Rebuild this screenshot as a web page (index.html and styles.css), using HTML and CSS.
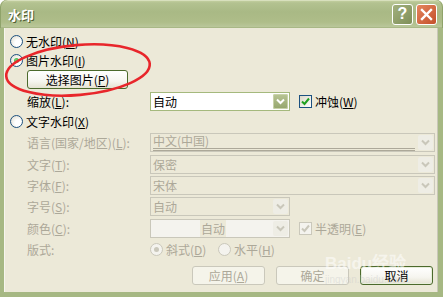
FILE: index.html
```html
<!DOCTYPE html>
<html lang="zh-CN">
<head>
    <meta charset="UTF-8">
    <title>水印</title>
    <link rel="stylesheet" href="styles.css">
</head>
<body>

    <div class="window">
        <!-- 标题栏 -->
        <div class="titlebar">
            <span class="title">水印</span>
            <div class="caption-buttons">
                <span class="cap help">?</span>
                <span class="cap close">
                    <svg width="13" height="13" viewBox="0 0 13 13"><path d="M2 2 L11 11 M11 2 L2 11" stroke="#fff" stroke-width="2.4" stroke-linecap="square"/></svg>
                </span>
            </div>
        </div>

        <!-- 对话框内容 -->
        <div class="client">
            <div class="row r1"><span class="radio"></span><span class="txt">无水印(<u>N</u>)</span></div>
            <div class="row r2"><span class="radio checked"></span><span class="txt">图片水印(<u>I</u>)</span></div>
            <div class="row r-pick indent"><span class="btn pick">选择图片(<u>P</u>)</span></div>
            <div class="row r-zoom indent">
                <span class="label">缩放(<u>L</u>):</span>
                <div class="combo narrow"><span class="value">自动</span><span class="arrow"><svg width="9" height="7" viewBox="0 0 9 7"><path d="M1 1.5 L4.5 5 L8 1.5" fill="none" stroke="#fff" stroke-width="2"/></svg></span></div>
                <div class="check-row"><span class="check"><svg width="9" height="9" viewBox="0 0 9 9"><path d="M1 4.5 L3.5 7 L8 1.5" fill="none" stroke="#21a121" stroke-width="2"/></svg></span><span class="txt">冲蚀(<u>W</u>)</span></div>
            </div>
            <div class="row r3"><span class="radio"></span><span class="txt">文字水印(<u>X</u>)</span></div>

            <div class="row r-lang indent off">
                <span class="label">语言(国家/地区)(<u>L</u>):</span>
                <div class="combo wide dis"><span class="value underline">中文(中国)</span><span class="arrow"><svg width="9" height="7" viewBox="0 0 9 7"><path d="M1 1.5 L4.5 5 L8 1.5" fill="none" stroke="#c9c7ba" stroke-width="2"/></svg></span></div>
            </div>
            <div class="row r-text indent off">
                <span class="label">文字(<u>T</u>):</span>
                <div class="combo wide dis"><span class="value">保密</span><span class="arrow"><svg width="9" height="7" viewBox="0 0 9 7"><path d="M1 1.5 L4.5 5 L8 1.5" fill="none" stroke="#c9c7ba" stroke-width="2"/></svg></span></div>
            </div>
            <div class="row r-font indent off">
                <span class="label">字体(<u>F</u>):</span>
                <div class="combo wide dis"><span class="value">宋体</span><span class="arrow"><svg width="9" height="7" viewBox="0 0 9 7"><path d="M1 1.5 L4.5 5 L8 1.5" fill="none" stroke="#c9c7ba" stroke-width="2"/></svg></span></div>
            </div>
            <div class="row r-size indent off">
                <span class="label">字号(<u>S</u>):</span>
                <div class="combo narrow dis"><span class="value">自动</span><span class="arrow"><svg width="9" height="7" viewBox="0 0 9 7"><path d="M1 1.5 L4.5 5 L8 1.5" fill="none" stroke="#c9c7ba" stroke-width="2"/></svg></span></div>
            </div>
            <div class="row r-color indent off">
                <span class="label">颜色(<u>C</u>):</span>
                <div class="combo narrow dis light"><span class="value centered"><span class="chip">自动</span></span><span class="arrow"><svg width="9" height="7" viewBox="0 0 9 7"><path d="M1 1.5 L4.5 5 L8 1.5" fill="none" stroke="#c9c7ba" stroke-width="2"/></svg></span></div>
                <div class="check-row"><span class="check dis"><svg width="9" height="9" viewBox="0 0 9 9"><path d="M1 4.5 L3.5 7 L8 1.5" fill="none" stroke="#c9c7ba" stroke-width="2"/></svg></span><span class="txt">半透明(<u>E</u>)</span></div>
            </div>
            <div class="row r-layout indent off">
                <span class="label">版式:</span>
                <span class="radio dis checked"></span><span class="txt opt">斜式(<u>D</u>)</span>
                <span class="radio dis second"></span><span class="txt">水平(<u>H</u>)</span>
            </div>

            <!-- 底部按钮 -->
            <div class="footer">
                <span class="btn dis">应用(<u>A</u>)</span>
                <span class="btn dis">确定</span>
                <span class="btn default">取消</span>
            </div>
        </div>

        <!-- 红色圈注 -->
        <svg class="annotation" width="160" height="70" viewBox="0 0 160 70">
            <ellipse cx="78" cy="33" rx="72" ry="25" transform="rotate(-5 78 33)" fill="none" stroke="#e8262b" stroke-width="2.6"/>
        </svg>

        <div class="stamp">Bai<span class="paw">du</span>经验<small>jingyan.baidu.com</small></div>
    </div>

</body>
</html>
```

FILE: styles.css
```css
html {
    background: #fff;
}

body {
    margin: 0;
    font-family: "Noto Sans CJK SC", "Liberation Sans", sans-serif;
    font-size: 12px;
    color: #000;
}

u {
    text-decoration: underline;
}

.window {
    position: relative;
    width: 443px;
    height: 297px;
    display: flex;
    flex-direction: column;
    overflow: hidden;
}

/* 标题栏 */
.titlebar {
    height: 28px;
    flex: none;
    display: flex;
    align-items: center;
    justify-content: space-between;
    padding: 0 6px 0 8px;
    border-radius: 7px 7px 0 0;
    background: linear-gradient(#c8d3a4 0, #b3c290 3px, #a9b985 12px, #aebd89 22px, #bac79a 27px, #97a872 28px);
    box-shadow: inset 1px 0 0 #8fa36a, inset -1px 0 0 #8fa36a, inset 0 1px 0 #d8e0bd;
}

.title {
    color: #fff;
    font-weight: bold;
    font-size: 13px;
    text-shadow: 1px 1px 0 #4f5d34;
}

.caption-buttons {
    display: flex;
    gap: 3px;
}

.cap {
    width: 19px;
    height: 19px;
    border: 1px solid #fff;
    border-radius: 3px;
    display: flex;
    align-items: center;
    justify-content: center;
    color: #fff;
    font-family: "Liberation Sans", sans-serif;
    font-weight: bold;
    font-size: 16px;
}

.help {
    background: linear-gradient(135deg, #a2b07e, #7f8f58);
}

.close {
    background: linear-gradient(135deg, #e4865f, #c44f2a);
}

/* 内容区 */
.client {
    flex: 1;
    background: #ece9d8;
    border-left: 4px solid #a6b883;
    border-right: 5px solid #a6b883;
    border-bottom: 5px solid #a6b883;
    box-shadow: inset 1px 0 0 #f6f5ee, inset -1px 0 0 #c9c7b8;
    padding: 4px 0 0 6px;
    display: flex;
    flex-direction: column;
}

.row {
    display: flex;
    align-items: center;
    height: 18px;
    flex: none;
}

.indent {
    padding-left: 17px;
}

.r2 { margin-top: 1px; }
.r-pick { margin-top: 1px; height: 19px; }
.r-zoom { margin-top: 3px; height: 19px; }
.r3 { margin-top: 1px; }
.r-lang { margin-top: 3px; }
.r-text { margin-top: 4px; }
.r-font { margin-top: 3px; }
.r-size { margin-top: 3px; }
.r-color { margin-top: 4px; }
.r-layout { margin-top: 3px; }

.txt {
    margin-left: 3px;
    white-space: nowrap;
}

.off .label,
.off .txt {
    color: #aca899;
}

.label {
    width: 123px;
    flex: none;
    white-space: nowrap;
}

/* 单选框 */
.radio {
    width: 11px;
    height: 11px;
    flex: none;
    border: 1px solid #1c5180;
    border-radius: 50%;
    background: radial-gradient(circle at 65% 65%, #fff 30%, #dcd9c8 100%);
    position: relative;
}

.radio.checked::after {
    content: "";
    position: absolute;
    left: 3px;
    top: 3px;
    width: 5px;
    height: 5px;
    border-radius: 50%;
    background: radial-gradient(circle at 40% 40%, #7ad47a, #21a121);
}

.radio.dis {
    border-color: #cac8bb;
    background: #f4f3ee;
}

.radio.dis.checked::after {
    background: #cac8bb;
}

.opt {
    width: 52px;
}

.radio.second {
    margin-left: 0;
}

/* 按钮 */
.btn {
    height: 17px;
    display: flex;
    align-items: center;
    justify-content: center;
    border: 1px solid #4c6a2c;
    border-radius: 3px;
    background: linear-gradient(#fff, #f6f5ef 60%, #e5e2d2);
    white-space: nowrap;
}

.pick {
    width: 99px;
}

.btn.dis {
    border-color: #cac8bb;
    background: #f5f4ea;
    color: #aca899;
}

.btn.default {
    box-shadow: inset 0 0 0 1px #e8eedb;
}

.footer {
    display: flex;
    gap: 11px;
    margin-top: 8px;
    padding-left: 182px;
}

.footer .btn {
    width: 71px;
}

/* 下拉框 */
.combo {
    height: 17px;
    flex: none;
    border: 1px solid #a5b97d;
    background: #fff;
    display: flex;
    align-items: center;
    padding: 0 1px 0 2px;
}

.r-zoom .combo {
    height: 17px;
}

.narrow {
    width: 135px;
}

.wide {
    width: 280px;
}

.combo .value {
    flex: 1;
    line-height: 15px;
}

.combo .arrow {
    width: 15px;
    height: 15px;
    flex: none;
    display: flex;
    align-items: center;
    justify-content: center;
    border-radius: 2px;
    background: linear-gradient(#b9c595, #94a56c);
    box-shadow: inset 0 0 0 1px #c8d2a9;
}

.combo.dis {
    border-color: #c9c7ba;
    background: #ece9d8;
    color: #aca899;
}

.combo.dis .arrow {
    background: #eeede5;
    box-shadow: none;
}

.combo.light {
    background: #f4f3ee;
}

.underline {
    border-bottom: 3px double #aca899;
    line-height: 13px;
    margin-right: 3px;
}

.centered {
    text-align: center;
}

.chip {
    background: #ece9d8;
    padding: 0 1px;
}

/* 复选框 */
.check-row {
    display: flex;
    align-items: center;
    margin-left: 9px;
}

.check {
    width: 11px;
    height: 11px;
    border: 1px solid #1c5180;
    background: linear-gradient(135deg, #dcd9c8, #fff);
    display: flex;
    align-items: center;
    justify-content: center;
}

.check.dis {
    border-color: #cac8bb;
    background: #f4f3ee;
}

/* 标注与水印 */
.annotation {
    position: absolute;
    left: 0;
    top: 37px;
}

.stamp {
    position: absolute;
    left: 326px;
    top: 256px;
    font-family: "Liberation Sans", sans-serif;
    font-size: 17px;
    font-weight: bold;
    color: rgba(255, 255, 255, 0.55);
    pointer-events: none;
    line-height: 16px;
}

.stamp {
    left: 325px;
    left: 325px;
}

.stamp small {
    display: block;
    font-size: 10px;
    font-weight: normal;
    color: rgba(200, 200, 200, 0.4);
}
```
